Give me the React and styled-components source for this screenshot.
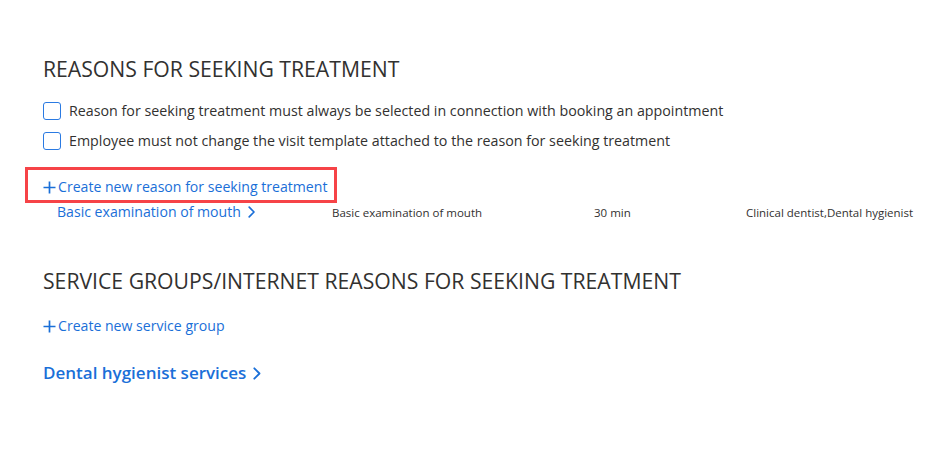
import React, { useState } from "react";
import styled, { createGlobalStyle } from "styled-components";

const GlobalStyle = createGlobalStyle`
    body {
        margin: 0;
        background: #ffffff;
        font-family: "Open Sans", "Noto Sans", sans-serif;
        color: #323130;
    }
`;

const reasons = [
    {
        id: 1,
        name: "Basic examination of mouth",
        template: "Basic examination of mouth",
        duration: "30 min",
        roles: "Clinical dentist,Dental hygienist",
    },
];

const serviceGroups = [{ id: 1, name: "Dental hygienist services" }];

function Chevron({ size = 12 }) {
    return (
        <svg width={size * 0.6} height={size} viewBox="0 0 6 10" fill="none">
            <path d="M1 1l4 4-4 4" stroke="currentColor" strokeWidth="1.4" strokeLinecap="round" strokeLinejoin="round" />
        </svg>
    );
}

function PlusIcon() {
    return (
        <svg width="13" height="13" viewBox="0 0 13 13" fill="none">
            <path d="M6.5 0.5v12M0.5 6.5h12" stroke="currentColor" strokeWidth="1.7" />
        </svg>
    );
}

function App() {
    const [settings, setSettings] = useState({ mustSelect: false, lockTemplate: false });

    const toggle = (key) => setSettings({ ...settings, [key]: !settings[key] });

    return (
        <Page>
            <GlobalStyle />
            <Section>
                <Title>REASONS FOR SEEKING TREATMENT</Title>
                <CheckList>
                    <CheckRow>
                        <CheckBox type="checkbox" checked={settings.mustSelect} onChange={() => toggle("mustSelect")} />
                        Reason for seeking treatment must always be selected in connection with booking an appointment
                    </CheckRow>
                    <CheckRow>
                        <CheckBox type="checkbox" checked={settings.lockTemplate} onChange={() => toggle("lockTemplate")} />
                        Employee must not change the visit template attached to the reason for seeking treatment
                    </CheckRow>
                </CheckList>

                <Highlight>
                    <CreateLink href="#">
                        <PlusIcon />
                        Create new reason for seeking treatment
                    </CreateLink>
                </Highlight>

                {reasons.map((reason) => (
                    <ReasonRow key={reason.id}>
                        <RowLink href="#">
                            {reason.name}
                            <Chevron size={12} />
                        </RowLink>
                        <Cell>{reason.template}</Cell>
                        <Cell>{reason.duration}</Cell>
                        <Cell>{reason.roles}</Cell>
                    </ReasonRow>
                ))}
            </Section>

            <Section>
                <Title>SERVICE GROUPS/INTERNET REASONS FOR SEEKING TREATMENT</Title>
                <GroupCreate>
                    <CreateLink href="#">
                        <PlusIcon />
                        Create new service group
                    </CreateLink>
                </GroupCreate>
                {serviceGroups.map((group) => (
                    <GroupLink href="#" key={group.id}>
                        {group.name}
                        <Chevron size={13} />
                    </GroupLink>
                ))}
            </Section>
        </Page>
    );
}

export default App;

const Page = styled.div`
    width: 948px;
    height: 450px;
    box-sizing: border-box;
    padding: 55px 0 0 43px;
    display: flex;
    flex-direction: column;
    gap: 45px;
    overflow: hidden;
`;

const Section = styled.section`
    display: flex;
    flex-direction: column;
`;

const Title = styled.h2`
    margin: 0;
    font-size: 21.2px;
    font-weight: 400;
    line-height: 28px;
    color: #323130;
`;

const CheckList = styled.div`
    display: flex;
    flex-direction: column;
    gap: 10px;
    margin-top: 18px;
`;

const CheckRow = styled.label`
    display: flex;
    align-items: center;
    gap: 8px;
    font-size: 14.25px;
    line-height: 20px;
    cursor: pointer;
`;

const CheckBox = styled.input`
    appearance: none;
    margin: 0;
    width: 18px;
    height: 18px;
    border: 1.5px solid #2a7ae2;
    border-radius: 3px;
    box-sizing: border-box;
    background: #ffffff;
    flex-shrink: 0;
`;

const Highlight = styled.div`
    align-self: flex-start;
    margin: 16px 0 0 -18px;
    padding: 7px 7px 3px 15px;
    border: 3px solid #f64347;
`;

const CreateLink = styled.a`
    display: flex;
    align-items: center;
    gap: 2px;
    font-size: 14.1px;
    line-height: 20px;
    color: #1a6fd8;
    text-decoration: none;
`;

const ReasonRow = styled.div`
    display: grid;
    grid-template-columns: 275px 262px 152px auto;
    align-items: center;
    padding-left: 14px;
    margin-top: -1px;
`;

const RowLink = styled.a`
    display: flex;
    align-items: center;
    gap: 7px;
    font-size: 14.1px;
    line-height: 20px;
    color: #1a6fd8;
    text-decoration: none;
`;

const Cell = styled.span`
    font-size: 11.5px;
    color: #323130;
    white-space: nowrap;
`;

const GroupCreate = styled.div`
    margin-top: 21px;
`;

const GroupLink = styled.a`
    display: flex;
    align-items: center;
    gap: 7px;
    margin-top: 26px;
    font-size: 17px;
    font-weight: 600;
    line-height: 22px;
    color: #1a6fd8;
    text-decoration: none;
`;
